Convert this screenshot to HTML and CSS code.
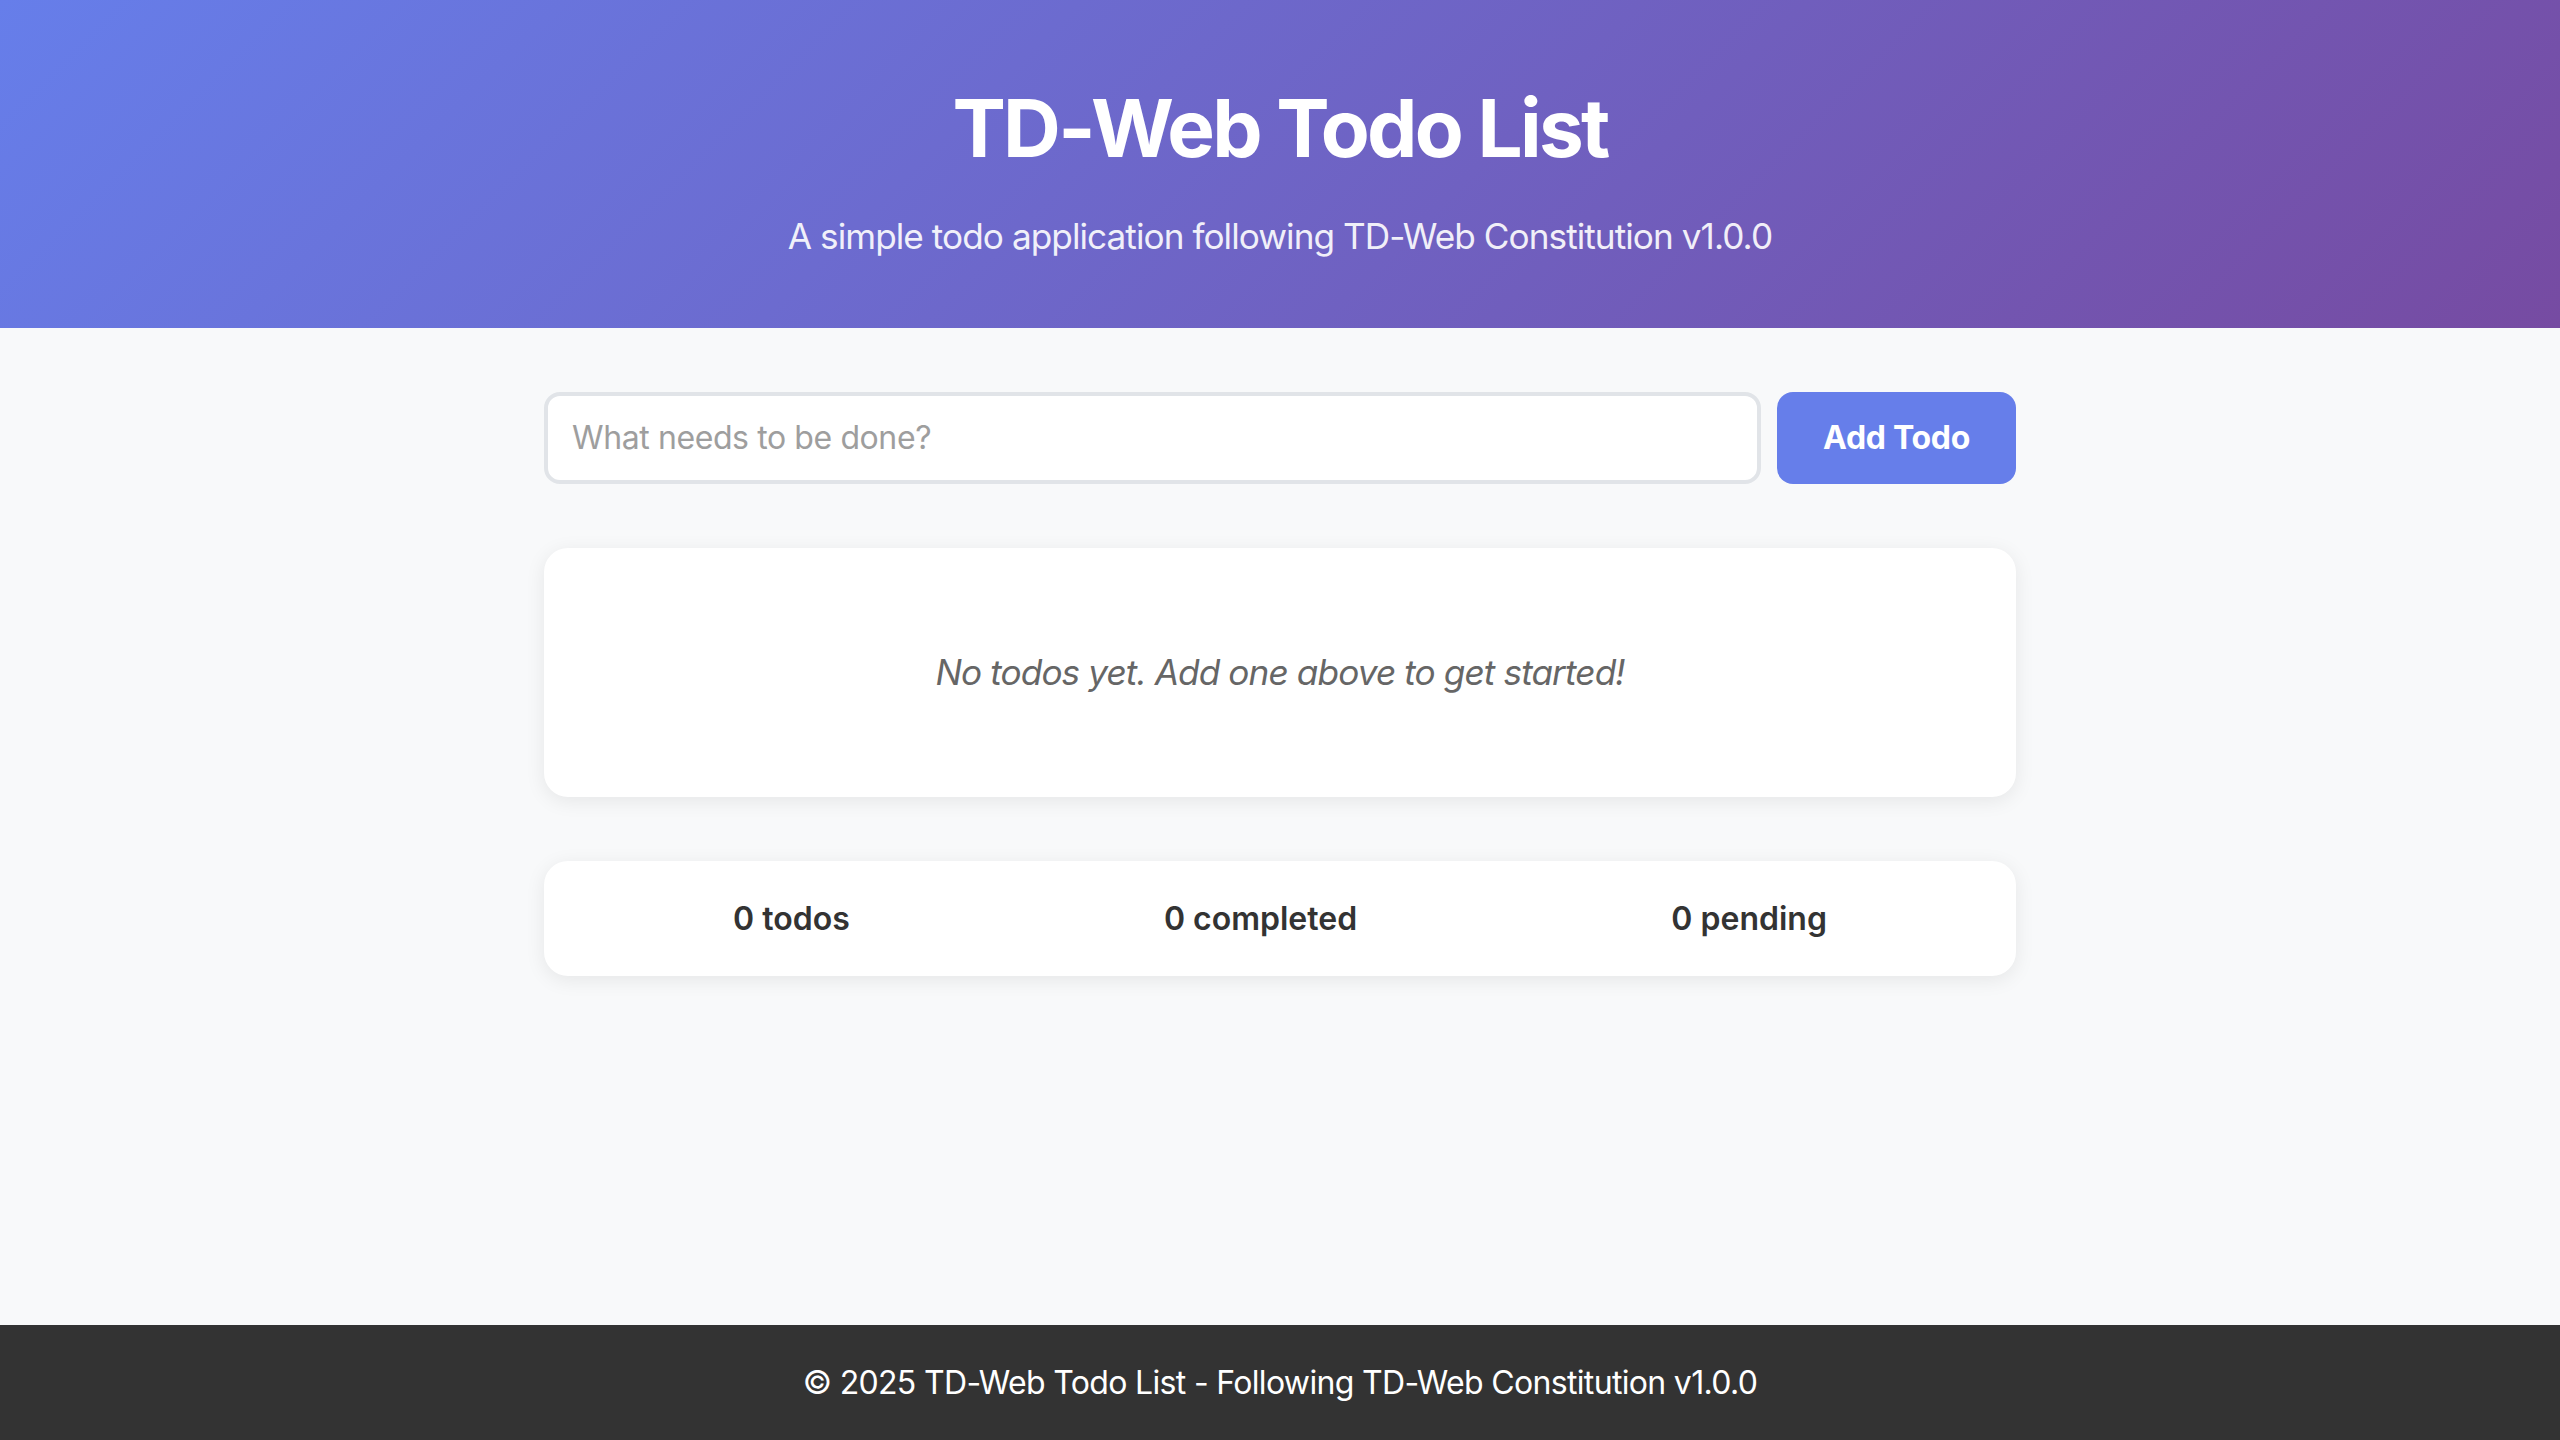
FILE: index.html
```html
<!DOCTYPE html>
<html lang="en">
<head>
<meta charset="utf-8">
<title>TD-Web Todo List</title>
<link rel="stylesheet" href="styles.css">
</head>
<body>
<div class="app">
  <header class="header">
    <h1 class="title">TD-Web Todo List</h1>
    <p class="subtitle">A simple todo application following TD-Web Constitution v1.0.0</p>
  </header>
  <main class="main">
    <form class="add-form">
      <input class="todo-input" type="text" placeholder="What needs to be done?">
      <button class="add-btn" type="button">Add Todo</button>
    </form>
    <section class="todo-list">
      <p class="empty">No todos yet. Add one above to get started!</p>
    </section>
    <section class="stats">
      <span class="stat">0 todos</span>
      <span class="stat">0 completed</span>
      <span class="stat">0 pending</span>
    </section>
  </main>
  <footer class="footer">
    <p>© 2025 TD-Web Todo List - Following TD-Web Constitution v1.0.0</p>
  </footer>
</div>
</body>
</html>
```
FILE: styles.css
```css
* { box-sizing: border-box; }
html, body { margin: 0; padding: 0; }
body {
  font-family: Inter, "Noto Sans", "Liberation Sans", sans-serif;
  font-size: 32px;
  line-height: 1.6;
  color: #333;
  background: #f8f9fa;
}
.app {
  min-height: 100vh;
  display: flex;
  flex-direction: column;
}
.header {
  background: linear-gradient(135deg, #667eea 0%, #764ba2 100%);
  color: #fff;
  text-align: center;
  padding: 64px 32px;
}
.title {
  margin: 0 0 16px;
  font-size: 80px;
  font-weight: 700;
  line-height: 1.6;
  letter-spacing: -2.7px;
}
.subtitle {
  margin: 0;
  font-size: 35.2px;
  opacity: 0.9;
  letter-spacing: -0.95px;
}
.main {
  flex: 1;
  width: 100%;
  max-width: 1600px;
  margin: 0 auto;
  padding: 64px;
}
.add-form {
  display: flex;
  gap: 16px;
  margin: 0 0 64px;
}
.todo-input {
  flex: 1;
  font: inherit;
  font-size: 32px;
  line-height: 38px;
  padding: 23px 24px;
  border: 4px solid #e1e4e8;
  border-radius: 16px;
  background: #fff;
  color: #333;
  outline: none;
  letter-spacing: -0.4px;
}
.todo-input::placeholder { color: #9e9e9e; }
.add-btn {
  font: inherit;
  font-size: 32px;
  font-weight: 700;
  line-height: 38px;
  padding: 23px 46px;
  background: #667eea;
  color: #fff;
  border: none;
  border-radius: 16px;
  letter-spacing: -0.3px;
}
.todo-list {
  background: #fff;
  border-radius: 24px;
  box-shadow: 0 4px 20px rgba(0, 0, 0, 0.08);
  margin-bottom: 64px;
}
.empty {
  margin: 0;
  padding: 96px 32px;
  text-align: center;
  font-style: italic;
  font-size: 35.2px;
  color: #666;
  letter-spacing: -0.9px;
}
.stats {
  display: flex;
  justify-content: space-around;
  background: #fff;
  border-radius: 24px;
  box-shadow: 0 4px 20px rgba(0, 0, 0, 0.08);
  padding: 32px;
}
.stat {
  font-weight: 600;
  color: #333;
}
.footer {
  background: #333;
  color: #fff;
  text-align: center;
  padding: 32px;
}
.footer p { margin: 0; letter-spacing: -0.67px; }
```
